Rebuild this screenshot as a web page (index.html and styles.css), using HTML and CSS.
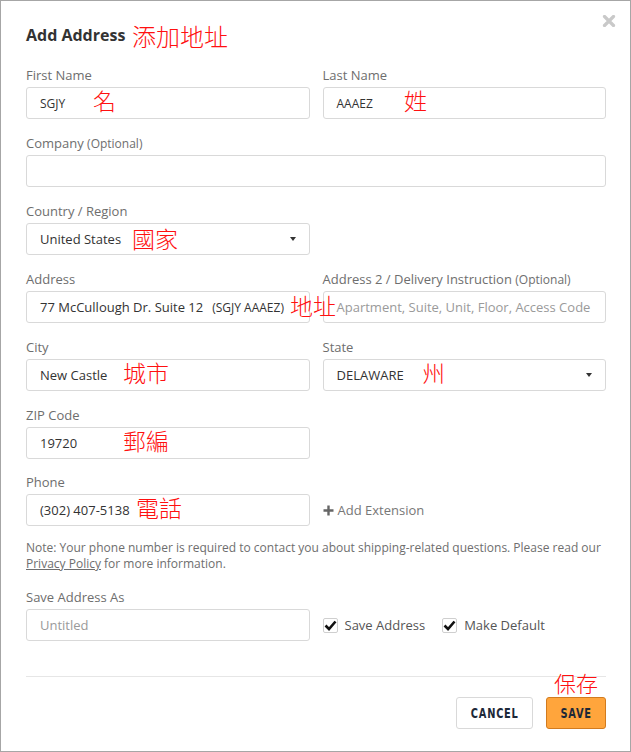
FILE: index.html
```html
<!DOCTYPE html>
<html lang="en">
<head>
    <meta charset="UTF-8">
    <meta name="viewport" content="width=device-width, initial-scale=1.0">
    <title>Add Address</title>
    <link rel="stylesheet" href="styles.css">
</head>
<body>
    <div class="sheet">
        <!-- Close button -->
        <button class="close-btn" aria-label="Close">
            <svg width="14" height="12" viewBox="0 0 14 12"><path d="M2.5 1.5 L11.5 10.5 M11.5 1.5 L2.5 10.5" stroke="#c9c9c9" stroke-width="3.2" stroke-linecap="round"/></svg>
        </button>

        <h2 class="title">Add Address</h2>

        <div class="row">
            <div class="field">
                <label>First Name</label>
                <div class="input small">SGJY</div>
            </div>
            <div class="field">
                <label>Last Name</label>
                <div class="input small">AAAEZ</div>
            </div>
        </div>

        <div class="row single">
            <div class="field">
                <label>Company <span class="opt">(Optional)</span></label>
                <div class="input"></div>
            </div>
        </div>

        <div class="row">
            <div class="field">
                <label>Country / Region</label>
                <div class="input select">United States <span class="caret"></span></div>
            </div>
        </div>

        <div class="row">
            <div class="field">
                <label>Address</label>
                <div class="input">77 McCullough Dr. Suite 12 <span class="extra">(SGJY AAAEZ)</span></div>
            </div>
            <div class="field">
                <label>Address 2 / Delivery Instruction <span class="opt">(Optional)</span></label>
                <div class="input placeholder">Apartment, Suite, Unit, Floor, Access Code</div>
            </div>
        </div>

        <div class="row">
            <div class="field">
                <label>City</label>
                <div class="input">New Castle</div>
            </div>
            <div class="field">
                <label>State</label>
                <div class="input select">DELAWARE <span class="caret"></span></div>
            </div>
        </div>

        <div class="row tight">
            <div class="field">
                <label>ZIP Code</label>
                <div class="input">19720</div>
            </div>
        </div>

        <div class="row tight">
            <div class="field">
                <label>Phone</label>
                <div class="input">(302) 407-5138</div>
            </div>
            <div class="side">
                <a class="add-ext" href="#">
                    <svg width="11" height="11" viewBox="0 0 11 11"><path d="M5.5 0.5 V10.5 M0.5 5.5 H10.5" stroke="#666" stroke-width="2.4"/></svg>
                    Add Extension
                </a>
            </div>
        </div>

        <p class="note">Note: Your phone number is required to contact you about shipping-related questions. Please read our <a href="#">Privacy Policy</a> for more information.</p>

        <div class="row">
            <div class="field">
                <label>Save Address As</label>
                <div class="input placeholder">Untitled</div>
            </div>
            <div class="side">
                <span class="check">
                    <span class="box"><svg width="13" height="11" viewBox="0 0 13 11"><path d="M1.5 5.5 L5 9 L11.5 1.5" fill="none" stroke="#111" stroke-width="2.6"/></svg></span>
                    Save Address
                </span>
                <span class="check">
                    <span class="box"><svg width="13" height="11" viewBox="0 0 13 11"><path d="M1.5 5.5 L5 9 L11.5 1.5" fill="none" stroke="#111" stroke-width="2.6"/></svg></span>
                    Make Default
                </span>
            </div>
        </div>

        <div class="footer">
            <button class="btn cancel"><span>CANCEL</span></button>
            <button class="btn save"><span>SAVE</span></button>
        </div>

        <!-- red notes written over the form -->
        <span class="cn cn-title">添加地址</span>
        <span class="cn cn-first">名</span>
        <span class="cn cn-last">姓</span>
        <span class="cn cn-country">國家</span>
        <span class="cn cn-address">地址</span>
        <span class="cn cn-city">城市</span>
        <span class="cn cn-state">州</span>
        <span class="cn cn-zip">郵編</span>
        <span class="cn cn-phone">電話</span>
        <span class="cn cn-save">保存</span>
    </div>
</body>
</html>
```

FILE: styles.css
```css
/* Page */
body {
    margin: 0;
    padding: 0;
    font-family: 'Open Sans', 'Noto Sans', sans-serif;
    background: #fff;
}

.sheet {
    position: relative;
    width: 631px;
    height: 752px;
    box-sizing: border-box;
    border: 1px solid #a6a6a6;
    padding: 23px 24px 0 25px;
    background: #fff;
}

.close-btn {
    position: absolute;
    top: 14px;
    right: 14px;
    padding: 0;
    border: none;
    background: none;
    line-height: 0;
    cursor: pointer;
}

.title {
    margin: 0 0 20px;
    font-size: 16px;
    line-height: 22px;
    font-weight: bold;
    color: #333;
}

/* Form rows */
.row {
    display: grid;
    grid-template-columns: 1fr 1fr;
    column-gap: 13px;
    margin-bottom: 15px;
}

.row.single {
    grid-template-columns: 1fr;
}

.row.tight {
    margin-bottom: 14px;
}

.field label {
    display: block;
    height: 18px;
    font-size: 13px;
    line-height: 18px;
    color: #6e6e6e;
    margin-bottom: 3px;
    white-space: nowrap;
}

.field label .opt {
    font-size: 12px;
    line-height: 1;
}

.input {
    height: 32px;
    box-sizing: border-box;
    border: 1px solid #d9d9d9;
    border-radius: 3px;
    padding: 0 13px;
    display: flex;
    align-items: center;
    font-size: 13px;
    color: #333;
    white-space: nowrap;
    overflow: hidden;
}

.input.small {
    font-size: 12px;
}

.input .extra {
    font-size: 12px;
    margin-left: 9px;
}

.input.placeholder {
    color: #9a9a9a;
}

.select {
    justify-content: space-between;
}

.caret {
    width: 0;
    height: 0;
    border-left: 3.5px solid transparent;
    border-right: 3.5px solid transparent;
    border-top: 4px solid #333;
}

/* Right hand items next to an input */
.side {
    align-self: end;
    height: 32px;
    display: flex;
    align-items: center;
    gap: 17px;
}

.add-ext {
    display: flex;
    align-items: center;
    gap: 4px;
    font-size: 13px;
    color: #777;
    text-decoration: none;
}

.check {
    display: flex;
    align-items: center;
    gap: 7px;
    font-size: 13px;
    color: #555;
}

.check .box {
    width: 15px;
    height: 15px;
    box-sizing: border-box;
    border: 1px solid #cfcfcf;
    border-radius: 2px;
    display: flex;
    align-items: center;
    justify-content: center;
}

.note {
    margin: 0 0 16px;
    font-size: 12px;
    line-height: 16px;
    color: #6e6e6e;
}

.note a {
    color: #6e6e6e;
    text-decoration: underline;
}

/* Footer buttons */
.footer {
    margin-top: 35px;
    padding-top: 20px;
    border-top: 1px solid #e6e6e6;
    display: flex;
    justify-content: flex-end;
    gap: 13px;
}

.btn {
    height: 32px;
    box-sizing: border-box;
    border-radius: 3px;
    padding: 0;
    font-family: 'DejaVu Sans Condensed', 'DejaVu Sans', sans-serif;
    font-weight: bold;
    font-size: 14px;
    letter-spacing: 1px;
    color: #1d2838;
    cursor: pointer;
}

.btn span {
    display: inline-block;
    transform: scaleX(0.78);
}

.cancel {
    width: 77px;
    background: #fff;
    border: 1px solid #d9d9d9;
}

.save {
    width: 60px;
    background: #ffa53c;
    border: 1px solid #d27b1e;
}

/* Red handwritten notes */
.cn {
    position: absolute;
    font-family: 'Noto Sans CJK TC', 'Noto Sans CJK SC', sans-serif;
    font-weight: 300;
    font-size: 23px;
    line-height: 1;
    color: #ff1010;
    white-space: nowrap;
}

.cn-title { left: 131px; top: 23px; font-size: 24px; }
.cn-first { left: 92px; top: 88px; }
.cn-last { left: 403px; top: 88px; }
.cn-country { left: 131px; top: 226px; }
.cn-address { left: 289px; top: 293px; }
.cn-city { left: 122px; top: 360px; }
.cn-state { left: 421px; top: 360px; }
.cn-zip { left: 122px; top: 428px; }
.cn-phone { left: 135px; top: 495px; }
.cn-save { left: 553px; top: 670px; font-size: 22px; }
```
